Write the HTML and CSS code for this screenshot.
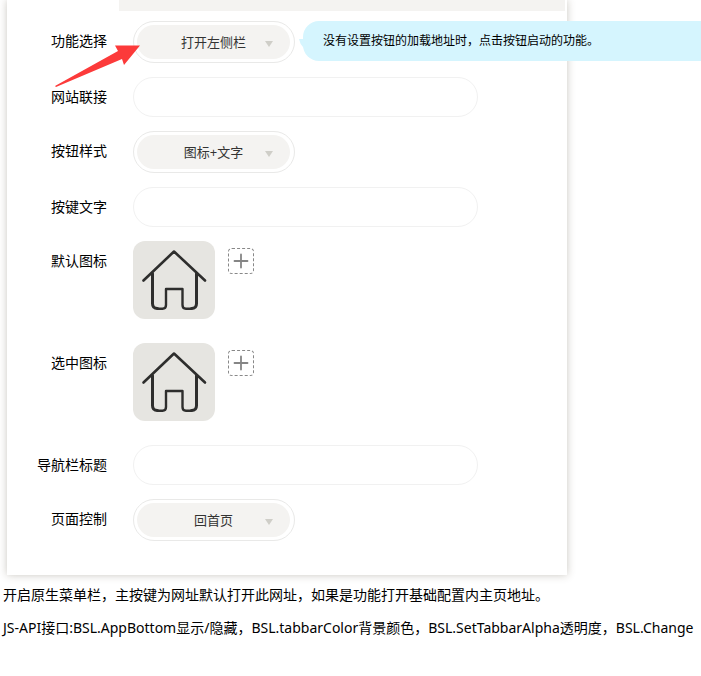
FILE: index.html
```html
<!DOCTYPE html>
<html lang="zh-CN">
<head>
<meta charset="utf-8">
<meta name="viewport" content="width=device-width, initial-scale=1">
<title>按钮设置</title>
<link rel="stylesheet" href="styles.css">
</head>
<body>
<svg class="defs" width="0" height="0" aria-hidden="true">
  <symbol id="house" viewBox="0 0 82 78">
    <g fill="none" stroke="#2e2e2d" stroke-linecap="round" stroke-linejoin="round">
      <path stroke-width="2.6" d="M10.5 39.5 41 10.5 72 39.5"/>
      <path stroke-width="3" d="M19.500 32.500V62.500Q19.500 67.500 24.500 67.500"/>
      <path stroke-width="3" d="M63.500 32.500V62.500Q63.500 67.500 58.500 67.500"/>
      <path stroke-width="2.400" d="M24.500 67.700H29.500Q33 67.700 33 64V48H49.500V64Q49.500 67.700 53 67.700H58.500"/>
    </g>
  </symbol>
  <symbol id="plus" viewBox="0 0 24 24">
    <path d="M12 5.500V18.500M5.500 12H18.500" fill="none" stroke="#858585" stroke-width="1.8" stroke-linecap="round"/>
  </symbol>
</svg>
<main class="panel">
  <div class="band"></div>
  <form class="form">
    <label class="label" for="action">功能选择</label>
    <div class="field">
      <div class="select">
        <select id="action"><option>打开左侧栏</option></select>
      </div>
      <div class="tip">没有设置按钮的加载地址时，点击按钮启动的功能。
        <svg class="tail" viewBox="0 0 10 12" aria-hidden="true"><path d="M0 0H10V12Q6 11 4 8Q1 5 0 0Z" fill="#d5f5fe"/></svg>
      </div>
      <svg class="pointer" viewBox="0 0 86 42" aria-hidden="true"><path d="M0 41 63 6 60 .5 85 .5 69 20 67 14 1 42Z" fill="#fc3a3a"/></svg>
    </div>

    <label class="label" for="url">网站联接</label>
    <input class="text" id="url" type="text">

    <label class="label" for="style">按钮样式</label>
    <div class="select">
      <select id="style"><option>图标+文字</option></select>
    </div>

    <label class="label" for="caption">按键文字</label>
    <input class="text" id="caption" type="text">

    <label class="label" for="icon-default">默认图标</label>
    <div class="icons">
      <svg class="preview" aria-hidden="true"><use href="#house"/></svg>
      <button class="add" id="icon-default" type="button"><svg aria-hidden="true"><use href="#plus"/></svg></button>
    </div>

    <label class="label" for="icon-active">选中图标</label>
    <div class="icons">
      <svg class="preview" aria-hidden="true"><use href="#house"/></svg>
      <button class="add" id="icon-active" type="button"><svg aria-hidden="true"><use href="#plus"/></svg></button>
    </div>

    <label class="label" for="title">导航栏标题</label>
    <input class="text" id="title" type="text">

    <label class="label" for="control">页面控制</label>
    <div class="select">
      <select id="control"><option>回首页</option></select>
    </div>
  </form>
</main>
<section class="notes">
  <p>开启原生菜单栏，主按键为网址默认打开此网址，如果是功能打开基础配置内主页地址。</p>
  <p>JS-API接口:BSL.AppBottom显示/隐藏，BSL.tabbarColor背景颜色，BSL.SetTabbarAlpha透明度，BSL.Change</p>
</section>
</body>
</html>
```

FILE: styles.css
```css
* {
  box-sizing: border-box;
}

body {
  margin: 0;
  overflow-x: hidden;
  background: #fff;
  color: #000;
  font: 14px/20px "Noto Sans", "Noto Sans CJK SC", sans-serif;
}

.defs {
  position: absolute;
}

.panel {
  max-width: 560px;
  margin: 0 7px;
  padding-bottom: 34px;
  background: #fff;
  box-shadow: 0 0 8px rgba(80, 70, 50, 0.3);
}

.band {
  height: 11px;
  margin: 0 2px 10px 112px;
  background: #f4f3f1;
}

.form {
  display: grid;
  grid-template-columns: 100px minmax(0, 345px);
  column-gap: 26px;
  row-gap: 14px;
  align-items: start;
}

.label {
  line-height: 40px;
  text-align: right;
}

.field {
  position: relative;
}

.select {
  position: relative;
  width: 162px;
  height: 42px;
  padding: 3px 4px 3px 3px;
  border: 1px solid #e9e9e8;
  border-radius: 21px;
}

.select::after {
  content: "";
  position: absolute;
  top: 19px;
  right: 21px;
  border: 4px solid transparent;
  border-top: 6px solid #cfcec8;
  border-bottom: 0;
  pointer-events: none;
}

.select select {
  display: block;
  width: 100%;
  height: 34px;
  padding: 0;
  border: 0;
  border-radius: 17px;
  background: #f4f3f1;
  color: #333;
  font: inherit;
  font-size: 13px;
  text-align: center;
  text-align-last: center;
  appearance: none;
}

.text {
  width: 100%;
  height: 40px;
  padding: 0 20px;
  border: 1px solid #f1f1f1;
  border-radius: 20px;
  background: #fff;
  font: inherit;
}

.tip {
  position: absolute;
  top: 0;
  left: 170px;
  width: calc(100vw - 303px);
  height: 40px;
  padding-left: 20px;
  border-radius: 16px 0 0 16px;
  background: #d5f5fe;
  font-size: 12px;
  line-height: 40px;
  white-space: nowrap;
}

.tail {
  position: absolute;
  top: 18px;
  left: -4px;
  width: 10px;
  height: 12px;
}

.pointer {
  position: absolute;
  top: 24px;
  left: -78px;
  width: 86px;
  height: 42px;
  pointer-events: none;
}

.icons {
  display: flex;
  align-items: flex-start;
  gap: 13px;
  margin-bottom: 10px;
}

.preview {
  width: 82px;
  height: 78px;
  border-radius: 12px;
  background: #e6e5e1;
}

.add {
  width: 26px;
  height: 26px;
  margin-top: 7px;
  padding: 0;
  border: 1px dashed #888;
  border-radius: 4px;
  background: #fff;
}

.add svg {
  display: block;
  width: 24px;
  height: 24px;
}

.notes {
  padding: 10px 3px;
}

.notes p {
  margin: 0 0 13px;
  white-space: nowrap;
}
```
